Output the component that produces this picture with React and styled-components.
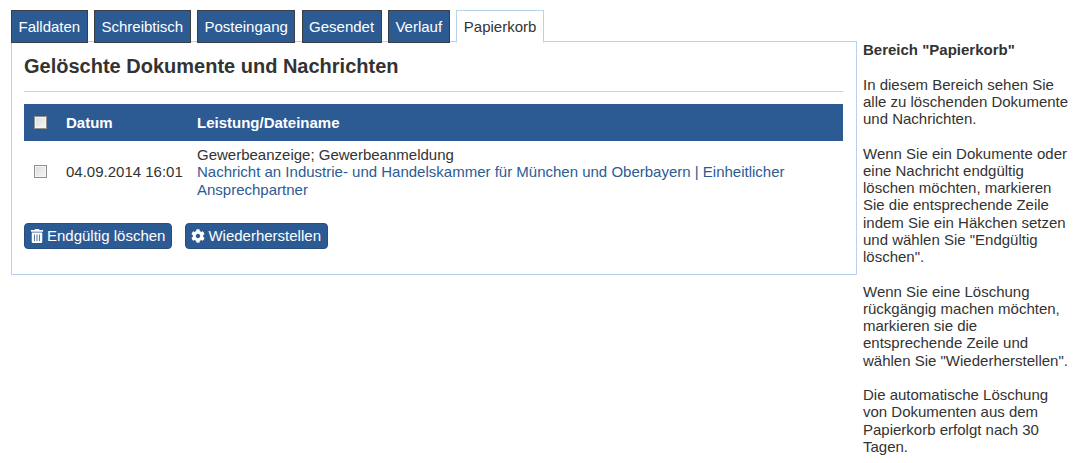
import styled, { createGlobalStyle } from "styled-components";
import { FaTrashAlt, FaCog } from "react-icons/fa";

const TABS = ["Falldaten", "Schreibtisch", "Posteingang", "Gesendet", "Verlauf", "Papierkorb"];

const GlobalStyle = createGlobalStyle`
  body {
    margin: 0;
    background: #fff;
    color: #333;
    font-family: "Liberation Sans", Arial, sans-serif;
    font-size: 15px;
    line-height: 17.25px;
  }
`;

const Page = styled.div`
  display: flex;
  align-items: flex-start;
  gap: 6px;
  padding: 10px 0 0 11px;
`;

const Main = styled.main`
  width: 846px;
  flex: none;
`;

const TabBar = styled.nav`
  display: flex;
  gap: 6.25px;
  position: relative;
  z-index: 1;
  margin-bottom: -2px;
`;

const Tab = styled.a`
  box-sizing: border-box;
  height: 33px;
  padding: 0 ${(p) => (p.$active ? "7px" : "6.5px")};
  display: flex;
  align-items: center;
  border: 1px solid ${(p) => (p.$active ? "#b9d1ea" : "#3b3f45")};
  border-bottom: ${(p) => (p.$active ? "1px solid #fff" : "1px solid #3b3f45")};
  background: ${(p) => (p.$active ? "#fff" : "#2c5b94")};
  color: ${(p) => (p.$active ? "#333" : "#fff")};
`;

const Panel = styled.section`
  box-sizing: border-box;
  height: 234px;
  padding: 0 13px 0 12px;
  border: 1px solid #b9d1ea;
`;

const Title = styled.h1`
  margin: 0;
  padding: 13px 0;
  border-bottom: 1px solid #c3d5e8;
  font-size: 20px;
  line-height: 23px;
  font-weight: bold;
  color: #333;
`;

const DocTable = styled.table`
  width: 100%;
  margin-top: 12px;
  border-collapse: collapse;
`;

const HeadCell = styled.th`
  height: 37px;
  padding: 0;
  background: #2c5b94;
  color: #fff;
  font-weight: bold;
  text-align: left;
`;

const Cell = styled.td`
  padding: 5px 0;
  vertical-align: middle;
`;

const Check = styled.input.attrs({ type: "checkbox" })`
  appearance: none;
  display: block;
  box-sizing: border-box;
  width: 13px;
  height: 13px;
  margin: 0 0 0 10px;
  border: 1px solid #8e8f8f;
  background: linear-gradient(135deg, #dcdcdc, #f6f6f6);
  box-shadow: inset 0 0 0 1px #f4f4f4;
`;

const FileLink = styled.a`
  display: block;
  color: #2c5b94;
`;

const Actions = styled.div`
  display: flex;
  gap: 13px;
  margin-top: 20px;
`;

const ActionButton = styled.button`
  box-sizing: border-box;
  height: 26px;
  padding: 0 6px 0 5px;
  display: flex;
  align-items: center;
  gap: 3px;
  border: 1px solid #264f80;
  border-radius: 4px;
  background: #2c5b94;
  color: #fff;
  font-family: inherit;
  font-size: 15px;

  svg {
    width: 14px;
    height: 14px;
  }
`;

const Help = styled.aside`
  width: 208px;
  flex: none;
  padding-top: 31px;

  p {
    margin: 0 0 17.25px;
  }
`;

export default function App() {
  return (
    <>
      <GlobalStyle />
      <Page>
        <Main>
          <TabBar>
            {TABS.map((tab) => (
              <Tab key={tab} $active={tab === "Papierkorb"}>
                {tab}
              </Tab>
            ))}
          </TabBar>
          <Panel>
            <Title>Gelöschte Dokumente und Nachrichten</Title>
            <DocTable>
              <thead>
                <tr>
                  <HeadCell style={{ width: 42 }}>
                    <Check />
                  </HeadCell>
                  <HeadCell style={{ width: 131 }}>Datum</HeadCell>
                  <HeadCell>Leistung/Dateiname</HeadCell>
                </tr>
              </thead>
              <tbody>
                <tr>
                  <Cell>
                    <Check />
                  </Cell>
                  <Cell>04.09.2014 16:01</Cell>
                  <Cell>
                    Gewerbeanzeige; Gewerbeanmeldung
                    <FileLink>
                      Nachricht an Industrie- und Handelskammer für München und Oberbayern | Einheitlicher
                      Ansprechpartner
                    </FileLink>
                  </Cell>
                </tr>
              </tbody>
            </DocTable>
            <Actions>
              <ActionButton>
                <FaTrashAlt />
                Endgültig löschen
              </ActionButton>
              <ActionButton>
                <FaCog />
                Wiederherstellen
              </ActionButton>
            </Actions>
          </Panel>
        </Main>
        <Help>
          <p>
            <strong>Bereich "Papierkorb"</strong>
          </p>
          <p>In diesem Bereich sehen Sie alle zu löschenden Dokumente und Nachrichten.</p>
          <p>
            Wenn Sie ein Dokumente oder eine Nachricht endgültig löschen möchten, markieren Sie die
            entsprechende Zeile indem Sie ein Häkchen setzen und wählen Sie "Endgültig löschen".
          </p>
          <p>
            Wenn Sie eine Löschung rückgängig machen möchten, markieren sie die entsprechende Zeile und
            wählen Sie "Wiederherstellen".
          </p>
          <p>
            Die automatische Löschung von Dokumenten aus dem Papierkorb erfolgt nach 30 Tagen.
          </p>
        </Help>
      </Page>
    </>
  );
}
